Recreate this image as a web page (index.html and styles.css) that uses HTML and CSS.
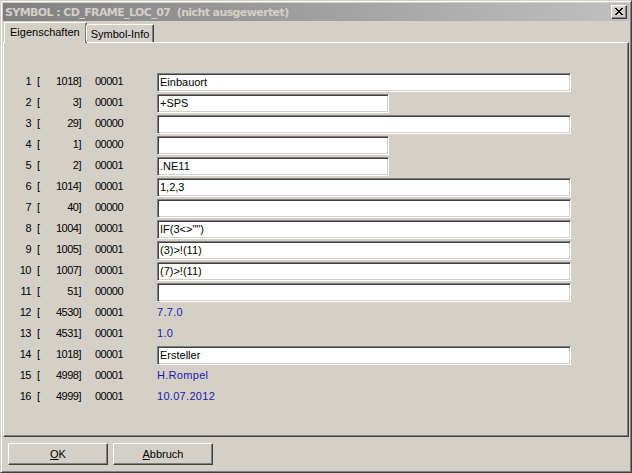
FILE: index.html
```html
<!DOCTYPE html>
<html>
<head>
<meta charset="utf-8">
<link rel="stylesheet" href="styles.css">
</head>
<body>
<div class="window">
  <div class="titlebar">
    <span class="title">SYMBOL : CD_FRAME_LOC_07&nbsp; (nicht ausgewertet)</span>
    <span class="close"><svg width="8" height="7" viewBox="0 0 8 7"><path d="M0 0h2v1h1v1h2V1h1V0h2v1H7v1H6v1H5v1h1v1h1v1h1v1H6V6H5V5H3v1H2v1H0V6h1V5h1V4h1V3H2V2H1V1H0z" fill="#000"/></svg></span>
  </div>
  <div class="tabs">
    <div class="tab active">Eigenschaften</div>
    <div class="tab">Symbol-Info</div>
  </div>
  <div class="panel">
    <div class="rows">
      <div class="row"><span class="n">1</span><span class="b">[</span><span class="v">1018]</span><span class="c">00001</span><span class="field long">Einbauort</span></div>
      <div class="row"><span class="n">2</span><span class="b">[</span><span class="v">3]</span><span class="c">00001</span><span class="field short">+SPS</span></div>
      <div class="row"><span class="n">3</span><span class="b">[</span><span class="v">29]</span><span class="c">00000</span><span class="field long"></span></div>
      <div class="row"><span class="n">4</span><span class="b">[</span><span class="v">1]</span><span class="c">00000</span><span class="field short"></span></div>
      <div class="row"><span class="n">5</span><span class="b">[</span><span class="v">2]</span><span class="c">00001</span><span class="field short">.NE11</span></div>
      <div class="row"><span class="n">6</span><span class="b">[</span><span class="v">1014]</span><span class="c">00001</span><span class="field long">1,2,3</span></div>
      <div class="row"><span class="n">7</span><span class="b">[</span><span class="v">40]</span><span class="c">00000</span><span class="field long"></span></div>
      <div class="row"><span class="n">8</span><span class="b">[</span><span class="v">1004]</span><span class="c">00001</span><span class="field long">IF(3&lt;&gt;"")</span></div>
      <div class="row"><span class="n">9</span><span class="b">[</span><span class="v">1005]</span><span class="c">00001</span><span class="field long">(3)&gt;!(11)</span></div>
      <div class="row"><span class="n">10</span><span class="b">[</span><span class="v">1007]</span><span class="c">00001</span><span class="field long">(7)&gt;!(11)</span></div>
      <div class="row"><span class="n">11</span><span class="b">[</span><span class="v">51]</span><span class="c">00000</span><span class="field long"></span></div>
      <div class="row"><span class="n">12</span><span class="b">[</span><span class="v">4530]</span><span class="c">00001</span><span class="info">7.7.0</span></div>
      <div class="row"><span class="n">13</span><span class="b">[</span><span class="v">4531]</span><span class="c">00001</span><span class="info">1.0</span></div>
      <div class="row"><span class="n">14</span><span class="b">[</span><span class="v">1018]</span><span class="c">00001</span><span class="field long">Ersteller</span></div>
      <div class="row"><span class="n">15</span><span class="b">[</span><span class="v">4998]</span><span class="c">00001</span><span class="info">H.Rompel</span></div>
      <div class="row"><span class="n">16</span><span class="b">[</span><span class="v">4999]</span><span class="c">00001</span><span class="info">10.07.2012</span></div>
    </div>
  </div>
  <div class="buttons">
    <button class="btn"><u>O</u>K</button>
    <button class="btn"><u>A</u>bbruch</button>
  </div>
</div>
</body>
</html>
```

FILE: styles.css
```css
* { box-sizing: border-box; }
html, body { margin: 0; padding: 0; background: #d4d0c8; }
body { font-family: "Liberation Sans", Arial, sans-serif; font-size: 11px; color: #000; }

.window {
  width: 632px;
  height: 473px;
  background: #d4d0c8;
  border: 1px solid;
  border-color: #d4d0c8 #404040 #404040 #d4d0c8;
  box-shadow: inset 1px 1px #fff, inset -1px -1px #808080;
  padding: 2px;
  display: flex;
  flex-direction: column;
}

.titlebar {
  height: 18px;
  flex: none;
  background: linear-gradient(to right, #808080, #c0c0c0);
  display: flex;
  align-items: center;
  justify-content: space-between;
  padding: 0 2px 0 2px;
}
.title {
  font-weight: bold;
  color: #d4d0c8;
  font-size: 11px;
  font-family: "DejaVu Sans", sans-serif;
  letter-spacing: -0.6px;
  white-space: pre;
}
.close {
  width: 16px;
  height: 14px;
  background: #d4d0c8;
  border: 1px solid;
  border-color: #fff #404040 #404040 #fff;
  box-shadow: inset -1px -1px #808080;
  display: flex;
  align-items: center;
  justify-content: center;
  padding-bottom: 1px;
}
.close svg { display: block; }

.tabs {
  height: 20px;
  flex: none;
  display: flex;
  align-items: flex-end;
  padding-left: 1px;
  margin-top: 1px;
  position: relative;
  z-index: 1;
}
.tab {
  height: 18px;
  padding: 0 4px 0 4px;
  border: 1px solid;
  border-bottom: none;
  border-color: #fff #404040 transparent #fff;
  box-shadow: inset -1px 0 #808080;
  border-radius: 2px 2px 0 0;
  display: flex;
  align-items: center;
  background: #d4d0c8;
}
.tab.active {
  height: 21px;
  margin-bottom: -1px;
  padding: 0 6px 2px 5px;
  margin-right: -1px;
}

.panel {
  flex: none;
  height: 395px;
  border: 1px solid;
  border-color: #fff #404040 #404040 #fff;
  box-shadow: inset -1px -1px #808080;
  padding-top: 30px;
}

.rows { display: flex; flex-direction: column; }
.row {
  display: grid;
  grid-template-columns: 27px 10px 40px 76px 1fr;
  height: 21px;
  align-items: start;
  line-height: 17px;
  letter-spacing: -0.5px;
}
.n { text-align: right; }
.b { padding-left: 6px; }
.v { text-align: right; }
.c { padding-left: 14px; }
.field {
  height: 19px;
  background: #fff;
  border: 1px solid;
  border-color: #808080 #fff #fff #808080;
  box-shadow: inset 1px 1px #404040, inset -1px -1px #d4d0c8;
  padding-left: 2px;
  line-height: 17px;
  letter-spacing: 0;
  white-space: pre;
}
.field.long { width: 414px; }
.field.short { width: 232px; }
.info { color: #1a1aa8; letter-spacing: 0.3px; }

.buttons {
  display: flex;
  gap: 5px;
  padding: 6px 0 0 5px;
}
.btn {
  width: 100px;
  height: 22px;
  background: #d4d0c8;
  border: 1px solid;
  border-color: #fff #404040 #404040 #fff;
  box-shadow: inset -1px -1px #808080;
  font-family: "Liberation Sans", Arial, sans-serif;
  font-size: 11px;
  color: #000;
  padding: 0;
  margin: 0;
}
```
